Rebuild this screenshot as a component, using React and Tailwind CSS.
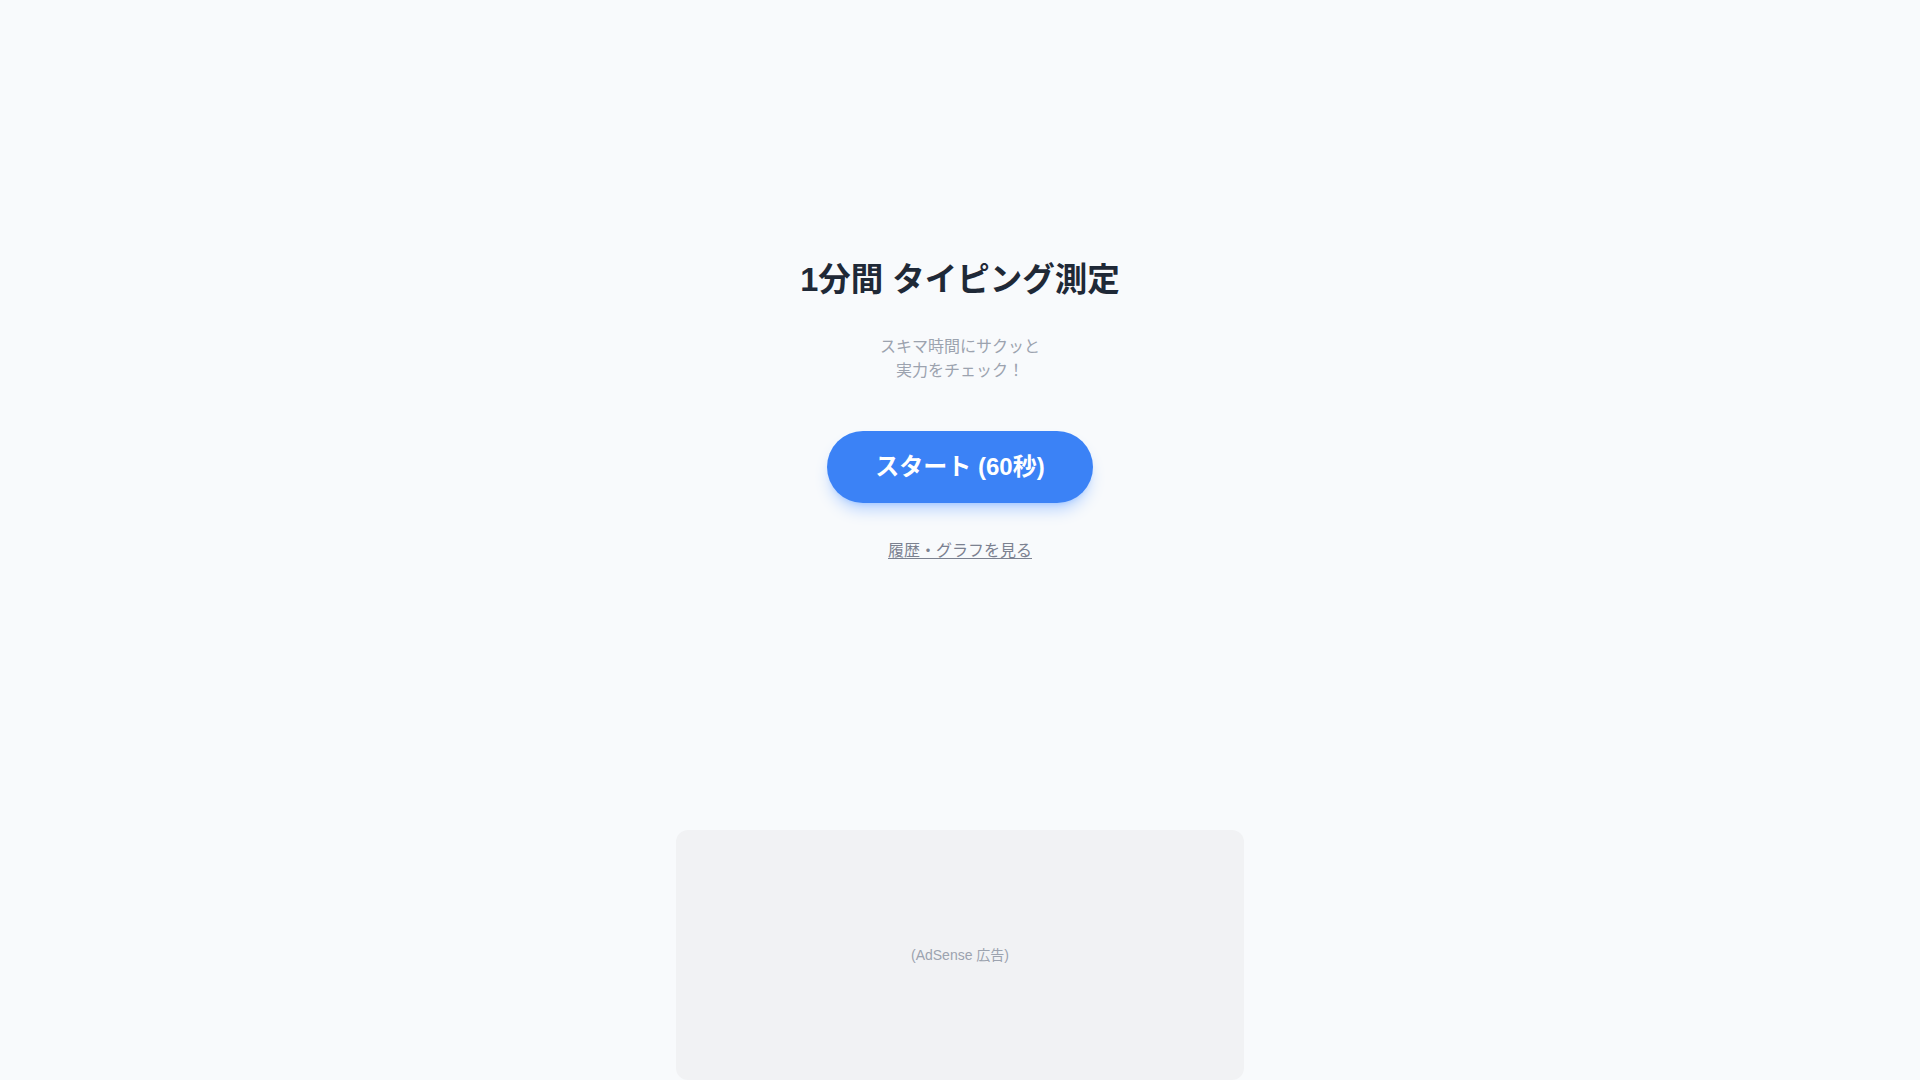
import React from 'react';

const App = () => {
    return (
        <div className="min-h-screen flex flex-col items-center bg-[#f8fafc] font-['Liberation_Sans','Noto_Sans_CJK_JP',sans-serif]">
            {/* Main start screen */}
            <main className="flex-1 w-full flex flex-col items-center pt-[262px]">
                <h1 className="text-[32.5px] leading-9 font-bold text-[#1f2937] mb-[37px]">
                    1分間 タイピング測定
                </h1>
                <p className="text-base leading-6 text-[#9ca3af] text-center">
                    スキマ時間にサクッと
                    <br />
                    実力をチェック！
                </p>
                <button
                    type="button"
                    className="mt-12 px-12 py-5 bg-[#3b82f6] text-white text-2xl leading-8 font-bold rounded-full shadow-lg shadow-blue-500/30"
                >
                    スタート (60秒)
                </button>
                <a href="#" className="mt-9 text-base leading-6 text-[#7b8190] underline underline-offset-2">
                    履歴・グラフを見る
                </a>
            </main>

            {/* Ad slot */}
            <div className="w-full max-w-[600px] px-4">
                <div className="h-[250px] rounded-xl bg-[#f1f2f4] flex items-center justify-center">
                    <span className="text-sm text-[#9ca3af]">(AdSense 広告)</span>
                </div>
            </div>
        </div>
    );
};

export default App;
